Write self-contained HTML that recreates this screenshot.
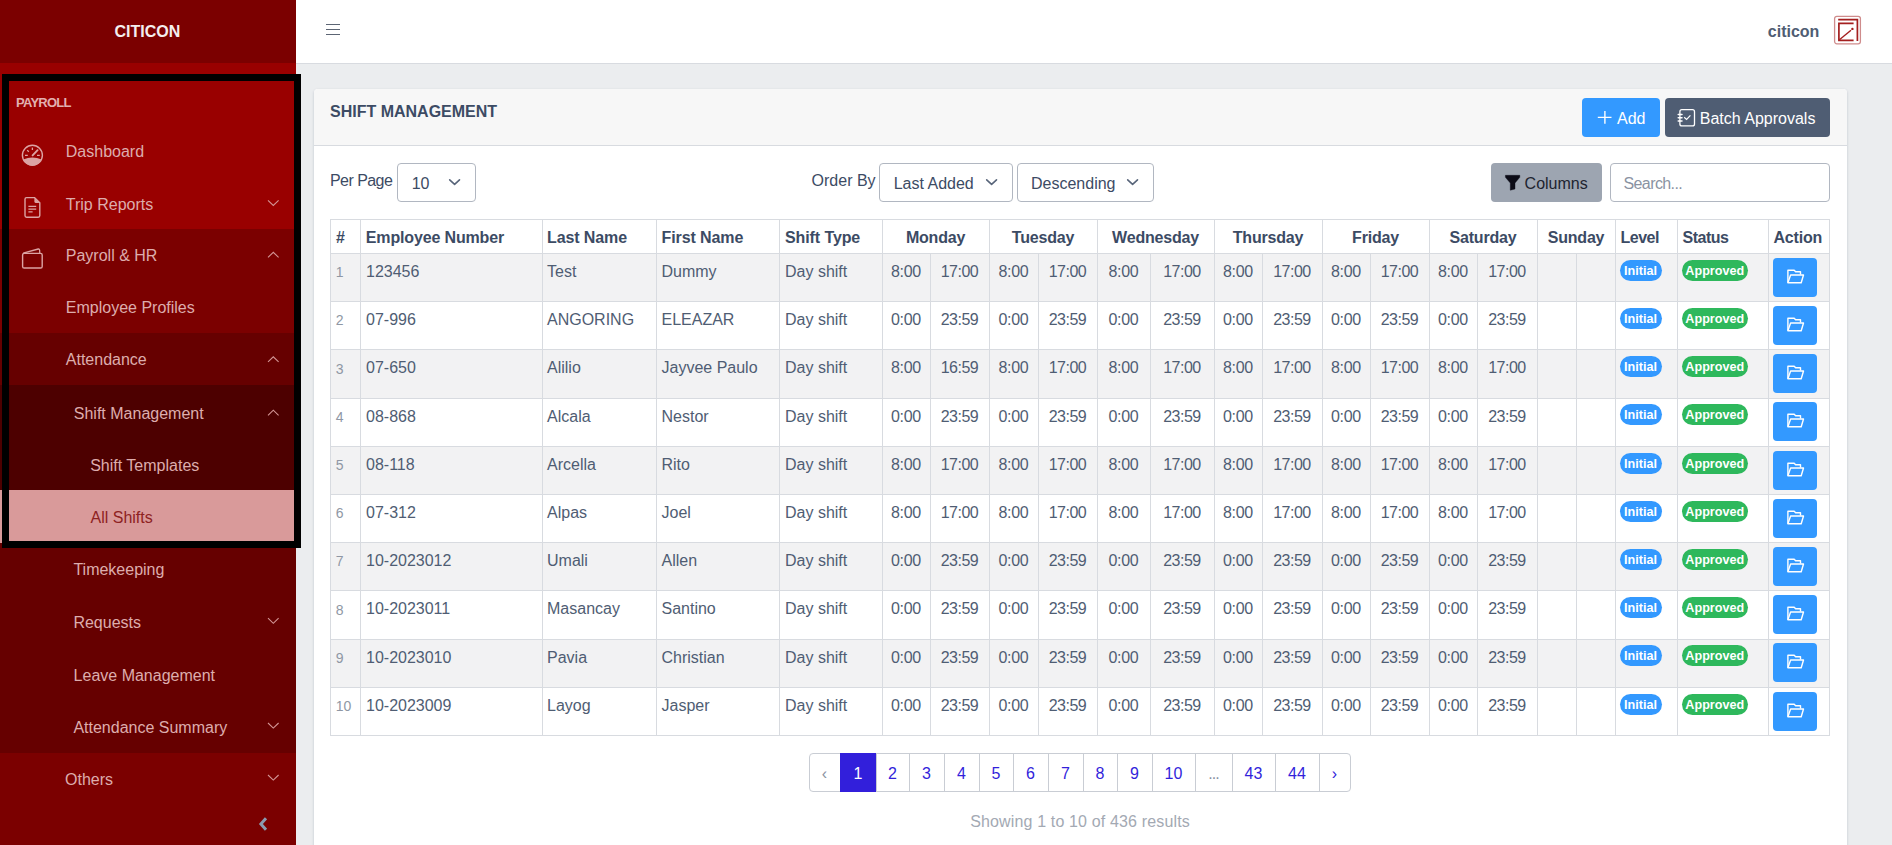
<!DOCTYPE html>
<html><head><meta charset="utf-8"><title>Shift Management</title>
<style>
html,body{margin:0;padding:0;}
body{width:1892px;height:845px;overflow:hidden;position:relative;background:#ebedef;font-family:"Liberation Sans", sans-serif;}
.t{position:absolute;white-space:nowrap;}
.r{position:absolute;}
.pill{border-radius:11px;color:#fff;font-size:12.6px;font-weight:700;line-height:22px;text-align:center;}
</style></head><body>
<div class="r" style="left:0px;top:0px;width:296px;height:63px;background:#7b0000;"></div>
<div class="r" style="left:0px;top:63px;width:296px;height:166px;background:#990000;"></div>
<div class="r" style="left:0px;top:229px;width:296px;height:104px;background:#7b0000;"></div>
<div class="r" style="left:0px;top:333px;width:296px;height:52px;background:#660000;"></div>
<div class="r" style="left:0px;top:385px;width:296px;height:105px;background:#4d0000;"></div>
<div class="r" style="left:0px;top:490px;width:296px;height:53px;background:#d99a9a;"></div>
<div class="r" style="left:0px;top:543px;width:296px;height:210px;background:#660000;"></div>
<div class="r" style="left:0px;top:753px;width:296px;height:92px;background:#7b0000;"></div>
<div class="t" style="left:114.5px;top:24.26px;font-size:16px;line-height:16px;font-weight:700;color:#f4eeee;">CITICON</div>
<div class="t" style="left:16px;top:96.40px;font-size:13px;line-height:13px;font-weight:700;color:#e2b0b0;letter-spacing:-0.75px">PAYROLL</div>
<div class="t" style="left:65.8px;top:143.86px;font-size:16px;line-height:16px;font-weight:400;color:#ddadad;">Dashboard</div>
<div class="t" style="left:65.8px;top:197.16px;font-size:16px;line-height:16px;font-weight:400;color:#ddadad;">Trip Reports</div>
<svg class="r" style="left:0;top:0" width="296" height="845"><path d="M268 200.3 L273.3 205.4 L278.6 200.3" fill="none" stroke="#d39595" stroke-width="1.1"/></svg>
<div class="t" style="left:65.8px;top:247.76px;font-size:16px;line-height:16px;font-weight:400;color:#ddadad;">Payroll &amp; HR</div>
<svg class="r" style="left:0;top:0" width="296" height="845"><path d="M268 257.4 L273.3 252.3 L278.6 257.4" fill="none" stroke="#d39595" stroke-width="1.1"/></svg>
<div class="t" style="left:65.8px;top:300.46px;font-size:16px;line-height:16px;font-weight:400;color:#ddadad;">Employee Profiles</div>
<div class="t" style="left:65.8px;top:352.26px;font-size:16px;line-height:16px;font-weight:400;color:#ddadad;">Attendance</div>
<svg class="r" style="left:0;top:0" width="296" height="845"><path d="M268 361.9 L273.3 356.8 L278.6 361.9" fill="none" stroke="#d39595" stroke-width="1.1"/></svg>
<div class="t" style="left:73.8px;top:405.66px;font-size:16px;line-height:16px;font-weight:400;color:#ddadad;">Shift Management</div>
<svg class="r" style="left:0;top:0" width="296" height="845"><path d="M268 415.3 L273.3 410.2 L278.6 415.3" fill="none" stroke="#d39595" stroke-width="1.1"/></svg>
<div class="t" style="left:90.2px;top:457.66px;font-size:16px;line-height:16px;font-weight:400;color:#ddadad;">Shift Templates</div>
<div class="t" style="left:90.5px;top:510.06px;font-size:16px;line-height:16px;font-weight:400;color:#8e2222;">All Shifts</div>
<div class="t" style="left:73.4px;top:562.46px;font-size:16px;line-height:16px;font-weight:400;color:#ddadad;">Timekeeping</div>
<div class="t" style="left:73.4px;top:615.06px;font-size:16px;line-height:16px;font-weight:400;color:#ddadad;">Requests</div>
<svg class="r" style="left:0;top:0" width="296" height="845"><path d="M268 618.2 L273.3 623.3 L278.6 618.2" fill="none" stroke="#d39595" stroke-width="1.1"/></svg>
<div class="t" style="left:73.6px;top:668.26px;font-size:16px;line-height:16px;font-weight:400;color:#ddadad;">Leave Management</div>
<div class="t" style="left:73.4px;top:719.86px;font-size:16px;line-height:16px;font-weight:400;color:#ddadad;">Attendance Summary</div>
<svg class="r" style="left:0;top:0" width="296" height="845"><path d="M268 723.0 L273.3 728.1 L278.6 723.0" fill="none" stroke="#d39595" stroke-width="1.1"/></svg>
<div class="t" style="left:65.0px;top:771.86px;font-size:16px;line-height:16px;font-weight:400;color:#ddadad;">Others</div>
<svg class="r" style="left:0;top:0" width="296" height="845"><path d="M268 775.0 L273.3 780.1 L278.6 775.0" fill="none" stroke="#d39595" stroke-width="1.1"/></svg>
<svg class="r" style="left:0;top:0" width="60" height="280">
<circle cx="32.4" cy="155.3" r="10" fill="none" stroke="#dca3a3" stroke-width="1.4"/>
<path d="M23.2 159.5 Q32.4 155.5 41.6 159.5 A10 10 0 0 1 23.2 159.5 Z" fill="#dca3a3"/>
<path d="M32.4 147.6 V150" stroke="#dca3a3" stroke-width="1.3"/>
<path d="M25 155.3 H27.8 M37 155.3 H39.8 M27.2 150.1 L28.8 151.7" stroke="#dca3a3" stroke-width="1.3"/>
<path d="M32.6 155.4 L37.6 150.2" stroke="#dca3a3" stroke-width="1.9" stroke-linecap="round"/>
<path d="M26.6 197.6 H34.6 L39.8 202.8 V215.6 Q39.8 217.2 38.2 217.2 H26.6 Q25 217.2 25 215.6 V199.2 Q25 197.6 26.6 197.6 Z" fill="none" stroke="#dca3a3" stroke-width="1.4"/>
<path d="M34.4 197.8 V201.4 Q34.4 203 36 203 H39.6 Z" fill="#dca3a3"/>
<path d="M28.4 206.4 H36.2 M28.4 209.2 H36.2 M28.4 211.9 H32.6" stroke="#dca3a3" stroke-width="1.2"/>
<rect x="22.6" y="253.4" width="19.6" height="14.6" rx="1.6" fill="none" stroke="#dca3a3" stroke-width="1.4"/>
<path d="M23.2 253.2 L38.2 249 Q39.4 248.8 39.6 250 L39.8 253.2" fill="none" stroke="#dca3a3" stroke-width="1.3"/>
</svg>
<svg class="r" style="left:250px;top:810px" width="30" height="30"><path d="M16 8.2 L10.9 14 L16 19.8" fill="none" stroke="#8a9bb0" stroke-width="3"/></svg>
<div class="r" style="left:296px;top:0px;width:1596px;height:63px;background:#ffffff;"></div>
<div class="r" style="left:296px;top:63px;width:1596px;height:1px;background:#d8dbe0;"></div>
<div class="r" style="left:326px;top:24px;width:14px;height:1.2px;background:#5c6574;"></div>
<div class="r" style="left:326px;top:29px;width:14px;height:1.2px;background:#5c6574;"></div>
<div class="r" style="left:326px;top:34px;width:14px;height:1.2px;background:#5c6574;"></div>
<div class="t" style="left:1767.8px;top:24.16px;font-size:16px;line-height:16px;font-weight:700;color:#4f5d73;">citicon</div>
<svg class="r" style="left:1830px;top:12px" width="36" height="36">
<rect x="4.6" y="4.4" width="25.8" height="27.4" rx="2.2" fill="none" stroke="#cf8c8c" stroke-width="1.3"/>
<path d="M8.2 7.6 H27.4 V29" fill="none" stroke="#a41f1f" stroke-width="1.7"/>
<path d="M23.6 11.4 H8.9 V28.4 H23.6" fill="none" stroke="#a41f1f" stroke-width="1.7"/>
<path d="M9.4 27.8 L21 18.2" stroke="#a41f1f" stroke-width="1.4"/>
<circle cx="22.4" cy="16.9" r="1.2" fill="#a41f1f"/>
</svg>
<div class="r" style="left:314px;top:89px;width:1533px;height:800px;background:#ffffff;border-radius:4px;box-shadow:0 1px 1px 0 rgba(60,75,100,.14),0 2px 1px -1px rgba(60,75,100,.12),0 1px 3px 0 rgba(60,75,100,.2)"></div>
<div class="r" style="left:314px;top:89px;width:1533px;height:56px;background:#f7f7f7;border-radius:4px 4px 0 0"></div>
<div class="r" style="left:314px;top:145px;width:1533px;height:1px;background:#d8dbe0;"></div>
<div class="t" style="left:330px;top:104.26px;font-size:16px;line-height:16px;font-weight:700;color:#3c4b64;">SHIFT MANAGEMENT</div>
<div class="r" style="left:1582px;top:98px;width:78px;height:39px;background:#3399ff;border-radius:4px"></div>
<svg class="r" style="left:1590px;top:104px" width="30" height="30"><path d="M7.8 13.4 H21.5 M14.9 7 V19.8" stroke="#fff" stroke-width="1.4"/></svg>
<div class="t" style="left:1617px;top:111.16px;font-size:16px;line-height:16px;font-weight:400;color:#ffffff;">Add</div>
<div class="r" style="left:1665px;top:98px;width:165px;height:39px;background:#4f5d73;border-radius:4px"></div>
<svg class="r" style="left:1672px;top:104px" width="30" height="30">
<rect x="7.9" y="5.7" width="14.6" height="16.2" rx="2" fill="none" stroke="#fff" stroke-width="1.3"/>
<path d="M6.2 10.5 H10 M6.2 13.8 H10 M6.2 17.1 H10" stroke="#fff" stroke-width="1.5" stroke-linecap="round"/>
<path d="M12.2 13.2 L14.6 15.4 L18.4 11.4" fill="none" stroke="#fff" stroke-width="1.2"/>
</svg>
<div class="t" style="left:1699.8px;top:111.16px;font-size:16px;line-height:16px;font-weight:400;color:#ffffff;">Batch Approvals</div>
<div class="t" style="left:330px;top:173.26px;font-size:16px;line-height:16px;font-weight:400;color:#3c4b64;letter-spacing:-0.55px">Per Page</div>
<div class="r" style="left:397px;top:163px;width:79px;height:39px;background:#fff;border:1px solid #b1b7c1;border-radius:4px;box-sizing:border-box"></div>
<div class="t" style="left:411.7px;top:176.06px;font-size:16px;line-height:16px;font-weight:400;color:#3c4b64;">10</div>
<svg class="r" style="left:446px;top:174px" width="16" height="16"><path d="M3.7 5.9 L8.6 10.4 L13.5 5.9" fill="none" stroke="#58657a" stroke-width="1.6" stroke-linecap="round" stroke-linejoin="round"/></svg>
<div class="t" style="left:811.6px;top:173.06px;font-size:16px;line-height:16px;font-weight:400;color:#3c4b64;">Order By</div>
<div class="r" style="left:879px;top:163px;width:134px;height:39px;background:#fff;border:1px solid #b1b7c1;border-radius:4px;box-sizing:border-box"></div>
<div class="t" style="left:893.7px;top:176.06px;font-size:16px;line-height:16px;font-weight:400;color:#3c4b64;">Last Added</div>
<svg class="r" style="left:983px;top:174px" width="16" height="16"><path d="M3.7 5.9 L8.6 10.4 L13.5 5.9" fill="none" stroke="#58657a" stroke-width="1.6" stroke-linecap="round" stroke-linejoin="round"/></svg>
<div class="r" style="left:1017px;top:163px;width:137px;height:39px;background:#fff;border:1px solid #b1b7c1;border-radius:4px;box-sizing:border-box"></div>
<div class="t" style="left:1031px;top:176.06px;font-size:16px;line-height:16px;font-weight:400;color:#3c4b64;">Descending</div>
<svg class="r" style="left:1124px;top:174px" width="16" height="16"><path d="M3.7 5.9 L8.6 10.4 L13.5 5.9" fill="none" stroke="#58657a" stroke-width="1.6" stroke-linecap="round" stroke-linejoin="round"/></svg>
<div class="r" style="left:1491px;top:163px;width:111px;height:39px;background:#9da5b1;border-radius:4px"></div>
<svg class="r" style="left:1504px;top:174px" width="18" height="18"><path d="M1.4 1.3 H15.8 V3.3 L11 9.1 V15 L6.3 16.2 V9.1 L1.4 3.3 Z" fill="#0b0b16" stroke="#0b0b16" stroke-width="0.4" stroke-linejoin="round"/></svg>
<div class="t" style="left:1524.6px;top:176.06px;font-size:16px;line-height:16px;font-weight:400;color:#1e2430;">Columns</div>
<div class="r" style="left:1610px;top:163px;width:220px;height:39px;background:#fff;border:1px solid #b1b7c1;border-radius:4px;box-sizing:border-box"></div>
<div class="t" style="left:1623.5px;top:176.06px;font-size:16px;line-height:16px;font-weight:400;color:#8a93a2;letter-spacing:-0.6px">Search...</div>
<div class="r" style="left:331px;top:254px;width:1498px;height:47px;background:#f2f2f3;"></div>
<div class="r" style="left:331px;top:350px;width:1498px;height:48px;background:#f2f2f3;"></div>
<div class="r" style="left:331px;top:447px;width:1498px;height:47px;background:#f2f2f3;"></div>
<div class="r" style="left:331px;top:543px;width:1498px;height:47px;background:#f2f2f3;"></div>
<div class="r" style="left:331px;top:640px;width:1498px;height:47px;background:#f2f2f3;"></div>
<div class="r" style="left:330px;top:219px;width:1500px;height:1px;background:#d8dbe0;"></div>
<div class="r" style="left:330px;top:253px;width:1500px;height:1px;background:#d8dbe0;"></div>
<div class="r" style="left:330px;top:301px;width:1500px;height:1px;background:#d8dbe0;"></div>
<div class="r" style="left:330px;top:349px;width:1500px;height:1px;background:#d8dbe0;"></div>
<div class="r" style="left:330px;top:398px;width:1500px;height:1px;background:#d8dbe0;"></div>
<div class="r" style="left:330px;top:446px;width:1500px;height:1px;background:#d8dbe0;"></div>
<div class="r" style="left:330px;top:494px;width:1500px;height:1px;background:#d8dbe0;"></div>
<div class="r" style="left:330px;top:542px;width:1500px;height:1px;background:#d8dbe0;"></div>
<div class="r" style="left:330px;top:590px;width:1500px;height:1px;background:#d8dbe0;"></div>
<div class="r" style="left:330px;top:639px;width:1500px;height:1px;background:#d8dbe0;"></div>
<div class="r" style="left:330px;top:687px;width:1500px;height:1px;background:#d8dbe0;"></div>
<div class="r" style="left:330px;top:735px;width:1500px;height:1px;background:#d8dbe0;"></div>
<div class="r" style="left:330px;top:219px;width:1px;height:517px;background:#d8dbe0;"></div>
<div class="r" style="left:360px;top:219px;width:1px;height:517px;background:#d8dbe0;"></div>
<div class="r" style="left:542px;top:219px;width:1px;height:517px;background:#d8dbe0;"></div>
<div class="r" style="left:656px;top:219px;width:1px;height:517px;background:#d8dbe0;"></div>
<div class="r" style="left:779px;top:219px;width:1px;height:517px;background:#d8dbe0;"></div>
<div class="r" style="left:882px;top:219px;width:1px;height:517px;background:#d8dbe0;"></div>
<div class="r" style="left:989px;top:219px;width:1px;height:517px;background:#d8dbe0;"></div>
<div class="r" style="left:1097px;top:219px;width:1px;height:517px;background:#d8dbe0;"></div>
<div class="r" style="left:1214px;top:219px;width:1px;height:517px;background:#d8dbe0;"></div>
<div class="r" style="left:1322px;top:219px;width:1px;height:517px;background:#d8dbe0;"></div>
<div class="r" style="left:1429px;top:219px;width:1px;height:517px;background:#d8dbe0;"></div>
<div class="r" style="left:1537px;top:219px;width:1px;height:517px;background:#d8dbe0;"></div>
<div class="r" style="left:1615px;top:219px;width:1px;height:517px;background:#d8dbe0;"></div>
<div class="r" style="left:1677px;top:219px;width:1px;height:517px;background:#d8dbe0;"></div>
<div class="r" style="left:1768px;top:219px;width:1px;height:517px;background:#d8dbe0;"></div>
<div class="r" style="left:1829px;top:219px;width:1px;height:517px;background:#d8dbe0;"></div>
<div class="r" style="left:930px;top:253px;width:1px;height:482px;background:#d8dbe0;"></div>
<div class="r" style="left:1038px;top:253px;width:1px;height:482px;background:#d8dbe0;"></div>
<div class="r" style="left:1150px;top:253px;width:1px;height:482px;background:#d8dbe0;"></div>
<div class="r" style="left:1262px;top:253px;width:1px;height:482px;background:#d8dbe0;"></div>
<div class="r" style="left:1370px;top:253px;width:1px;height:482px;background:#d8dbe0;"></div>
<div class="r" style="left:1477px;top:253px;width:1px;height:482px;background:#d8dbe0;"></div>
<div class="r" style="left:1576px;top:253px;width:1px;height:482px;background:#d8dbe0;"></div>
<div class="t" style="left:336px;top:230.06px;font-size:16px;line-height:16px;font-weight:700;color:#3c4b64;">#</div>
<div class="t" style="left:365.8px;top:230.06px;font-size:16px;line-height:16px;font-weight:700;color:#3c4b64;letter-spacing:-0.15px">Employee Number</div>
<div class="t" style="left:547px;top:230.06px;font-size:16px;line-height:16px;font-weight:700;color:#3c4b64;letter-spacing:-0.1px">Last Name</div>
<div class="t" style="left:661.5px;top:230.06px;font-size:16px;line-height:16px;font-weight:700;color:#3c4b64;letter-spacing:-0.1px">First Name</div>
<div class="t" style="left:785px;top:230.06px;font-size:16px;line-height:16px;font-weight:700;color:#3c4b64;letter-spacing:-0.1px">Shift Type</div>
<div class="t" style="left:882px;width:107px;text-align:center;top:230.06px;font-size:16px;line-height:16px;font-weight:700;color:#3c4b64;letter-spacing:-0.2px">Monday</div>
<div class="t" style="left:989px;width:108px;text-align:center;top:230.06px;font-size:16px;line-height:16px;font-weight:700;color:#3c4b64;letter-spacing:-0.2px">Tuesday</div>
<div class="t" style="left:1097px;width:117px;text-align:center;top:230.06px;font-size:16px;line-height:16px;font-weight:700;color:#3c4b64;letter-spacing:-0.2px">Wednesday</div>
<div class="t" style="left:1214px;width:108px;text-align:center;top:230.06px;font-size:16px;line-height:16px;font-weight:700;color:#3c4b64;letter-spacing:-0.2px">Thursday</div>
<div class="t" style="left:1322px;width:107px;text-align:center;top:230.06px;font-size:16px;line-height:16px;font-weight:700;color:#3c4b64;letter-spacing:-0.2px">Friday</div>
<div class="t" style="left:1429px;width:108px;text-align:center;top:230.06px;font-size:16px;line-height:16px;font-weight:700;color:#3c4b64;letter-spacing:-0.2px">Saturday</div>
<div class="t" style="left:1537px;width:78px;text-align:center;top:230.06px;font-size:16px;line-height:16px;font-weight:700;color:#3c4b64;letter-spacing:-0.2px">Sunday</div>
<div class="t" style="left:1620.5px;top:230.06px;font-size:16px;line-height:16px;font-weight:700;color:#3c4b64;letter-spacing:-0.5px">Level</div>
<div class="t" style="left:1682.5px;top:230.06px;font-size:16px;line-height:16px;font-weight:700;color:#3c4b64;letter-spacing:-0.5px">Status</div>
<div class="t" style="left:1773.5px;top:230.06px;font-size:16px;line-height:16px;font-weight:700;color:#3c4b64;letter-spacing:-0.2px">Action</div>
<div class="t" style="left:335.8px;top:265.15px;font-size:14px;line-height:14px;font-weight:400;color:#8f97a4;">1</div>
<div class="t" style="left:366px;top:264.06px;font-size:16px;line-height:16px;font-weight:400;color:#4f5d73;">123456</div>
<div class="t" style="left:547px;top:264.06px;font-size:16px;line-height:16px;font-weight:400;color:#4f5d73;">Test</div>
<div class="t" style="left:661.5px;top:264.06px;font-size:16px;line-height:16px;font-weight:400;color:#4f5d73;">Dummy</div>
<div class="t" style="left:785px;top:264.06px;font-size:16px;line-height:16px;font-weight:400;color:#4f5d73;">Day shift</div>
<div class="t" style="left:882px;width:48px;text-align:center;top:264.06px;font-size:16px;line-height:16px;font-weight:400;color:#4f5d73;letter-spacing:-0.3px">8:00</div>
<div class="t" style="left:930px;width:59px;text-align:center;top:264.06px;font-size:16px;line-height:16px;font-weight:400;color:#4f5d73;letter-spacing:-0.5px">17:00</div>
<div class="t" style="left:989px;width:49px;text-align:center;top:264.06px;font-size:16px;line-height:16px;font-weight:400;color:#4f5d73;letter-spacing:-0.3px">8:00</div>
<div class="t" style="left:1038px;width:59px;text-align:center;top:264.06px;font-size:16px;line-height:16px;font-weight:400;color:#4f5d73;letter-spacing:-0.5px">17:00</div>
<div class="t" style="left:1097px;width:53px;text-align:center;top:264.06px;font-size:16px;line-height:16px;font-weight:400;color:#4f5d73;letter-spacing:-0.3px">8:00</div>
<div class="t" style="left:1150px;width:64px;text-align:center;top:264.06px;font-size:16px;line-height:16px;font-weight:400;color:#4f5d73;letter-spacing:-0.5px">17:00</div>
<div class="t" style="left:1214px;width:48px;text-align:center;top:264.06px;font-size:16px;line-height:16px;font-weight:400;color:#4f5d73;letter-spacing:-0.3px">8:00</div>
<div class="t" style="left:1262px;width:60px;text-align:center;top:264.06px;font-size:16px;line-height:16px;font-weight:400;color:#4f5d73;letter-spacing:-0.5px">17:00</div>
<div class="t" style="left:1322px;width:48px;text-align:center;top:264.06px;font-size:16px;line-height:16px;font-weight:400;color:#4f5d73;letter-spacing:-0.3px">8:00</div>
<div class="t" style="left:1370px;width:59px;text-align:center;top:264.06px;font-size:16px;line-height:16px;font-weight:400;color:#4f5d73;letter-spacing:-0.5px">17:00</div>
<div class="t" style="left:1429px;width:48px;text-align:center;top:264.06px;font-size:16px;line-height:16px;font-weight:400;color:#4f5d73;letter-spacing:-0.3px">8:00</div>
<div class="t" style="left:1477px;width:60px;text-align:center;top:264.06px;font-size:16px;line-height:16px;font-weight:400;color:#4f5d73;letter-spacing:-0.5px">17:00</div>
<div class="r pill" style="left:1619.5px;top:259.8px;width:42px;height:21px;background:#3399ff">Initial</div>
<div class="r pill" style="left:1682px;top:259.8px;width:65.5px;height:21px;background:#2eb85c">Approved</div>
<div class="r" style="left:1773px;top:257.8px;width:44px;height:39px;background:#3399ff;border-radius:4px"></div>
<svg class="r" style="left:1786px;top:267.8px" width="19" height="17"><path d="M1.9 14.8 V2.2 H8.2 L9.6 3.8 H14.5 V6.4" fill="none" stroke="#fff" stroke-width="1.4" stroke-linejoin="round"/><path d="M1.9 14.8 L4.6 7 H17.5 L15.2 14.8 Z" fill="none" stroke="#fff" stroke-width="1.4" stroke-linejoin="round"/></svg>
<div class="t" style="left:335.8px;top:313.35px;font-size:14px;line-height:14px;font-weight:400;color:#8f97a4;">2</div>
<div class="t" style="left:366px;top:312.26px;font-size:16px;line-height:16px;font-weight:400;color:#4f5d73;">07-996</div>
<div class="t" style="left:547px;top:312.26px;font-size:16px;line-height:16px;font-weight:400;color:#4f5d73;">ANGORING</div>
<div class="t" style="left:661.5px;top:312.26px;font-size:16px;line-height:16px;font-weight:400;color:#4f5d73;">ELEAZAR</div>
<div class="t" style="left:785px;top:312.26px;font-size:16px;line-height:16px;font-weight:400;color:#4f5d73;">Day shift</div>
<div class="t" style="left:882px;width:48px;text-align:center;top:312.26px;font-size:16px;line-height:16px;font-weight:400;color:#4f5d73;letter-spacing:-0.3px">0:00</div>
<div class="t" style="left:930px;width:59px;text-align:center;top:312.26px;font-size:16px;line-height:16px;font-weight:400;color:#4f5d73;letter-spacing:-0.5px">23:59</div>
<div class="t" style="left:989px;width:49px;text-align:center;top:312.26px;font-size:16px;line-height:16px;font-weight:400;color:#4f5d73;letter-spacing:-0.3px">0:00</div>
<div class="t" style="left:1038px;width:59px;text-align:center;top:312.26px;font-size:16px;line-height:16px;font-weight:400;color:#4f5d73;letter-spacing:-0.5px">23:59</div>
<div class="t" style="left:1097px;width:53px;text-align:center;top:312.26px;font-size:16px;line-height:16px;font-weight:400;color:#4f5d73;letter-spacing:-0.3px">0:00</div>
<div class="t" style="left:1150px;width:64px;text-align:center;top:312.26px;font-size:16px;line-height:16px;font-weight:400;color:#4f5d73;letter-spacing:-0.5px">23:59</div>
<div class="t" style="left:1214px;width:48px;text-align:center;top:312.26px;font-size:16px;line-height:16px;font-weight:400;color:#4f5d73;letter-spacing:-0.3px">0:00</div>
<div class="t" style="left:1262px;width:60px;text-align:center;top:312.26px;font-size:16px;line-height:16px;font-weight:400;color:#4f5d73;letter-spacing:-0.5px">23:59</div>
<div class="t" style="left:1322px;width:48px;text-align:center;top:312.26px;font-size:16px;line-height:16px;font-weight:400;color:#4f5d73;letter-spacing:-0.3px">0:00</div>
<div class="t" style="left:1370px;width:59px;text-align:center;top:312.26px;font-size:16px;line-height:16px;font-weight:400;color:#4f5d73;letter-spacing:-0.5px">23:59</div>
<div class="t" style="left:1429px;width:48px;text-align:center;top:312.26px;font-size:16px;line-height:16px;font-weight:400;color:#4f5d73;letter-spacing:-0.3px">0:00</div>
<div class="t" style="left:1477px;width:60px;text-align:center;top:312.26px;font-size:16px;line-height:16px;font-weight:400;color:#4f5d73;letter-spacing:-0.5px">23:59</div>
<div class="r pill" style="left:1619.5px;top:308.0px;width:42px;height:21px;background:#3399ff">Initial</div>
<div class="r pill" style="left:1682px;top:308.0px;width:65.5px;height:21px;background:#2eb85c">Approved</div>
<div class="r" style="left:1773px;top:306.0px;width:44px;height:39px;background:#3399ff;border-radius:4px"></div>
<svg class="r" style="left:1786px;top:316.0px" width="19" height="17"><path d="M1.9 14.8 V2.2 H8.2 L9.6 3.8 H14.5 V6.4" fill="none" stroke="#fff" stroke-width="1.4" stroke-linejoin="round"/><path d="M1.9 14.8 L4.6 7 H17.5 L15.2 14.8 Z" fill="none" stroke="#fff" stroke-width="1.4" stroke-linejoin="round"/></svg>
<div class="t" style="left:335.8px;top:361.55px;font-size:14px;line-height:14px;font-weight:400;color:#8f97a4;">3</div>
<div class="t" style="left:366px;top:360.46px;font-size:16px;line-height:16px;font-weight:400;color:#4f5d73;">07-650</div>
<div class="t" style="left:547px;top:360.46px;font-size:16px;line-height:16px;font-weight:400;color:#4f5d73;">Alilio</div>
<div class="t" style="left:661.5px;top:360.46px;font-size:16px;line-height:16px;font-weight:400;color:#4f5d73;">Jayvee Paulo</div>
<div class="t" style="left:785px;top:360.46px;font-size:16px;line-height:16px;font-weight:400;color:#4f5d73;">Day shift</div>
<div class="t" style="left:882px;width:48px;text-align:center;top:360.46px;font-size:16px;line-height:16px;font-weight:400;color:#4f5d73;letter-spacing:-0.3px">8:00</div>
<div class="t" style="left:930px;width:59px;text-align:center;top:360.46px;font-size:16px;line-height:16px;font-weight:400;color:#4f5d73;letter-spacing:-0.5px">16:59</div>
<div class="t" style="left:989px;width:49px;text-align:center;top:360.46px;font-size:16px;line-height:16px;font-weight:400;color:#4f5d73;letter-spacing:-0.3px">8:00</div>
<div class="t" style="left:1038px;width:59px;text-align:center;top:360.46px;font-size:16px;line-height:16px;font-weight:400;color:#4f5d73;letter-spacing:-0.5px">17:00</div>
<div class="t" style="left:1097px;width:53px;text-align:center;top:360.46px;font-size:16px;line-height:16px;font-weight:400;color:#4f5d73;letter-spacing:-0.3px">8:00</div>
<div class="t" style="left:1150px;width:64px;text-align:center;top:360.46px;font-size:16px;line-height:16px;font-weight:400;color:#4f5d73;letter-spacing:-0.5px">17:00</div>
<div class="t" style="left:1214px;width:48px;text-align:center;top:360.46px;font-size:16px;line-height:16px;font-weight:400;color:#4f5d73;letter-spacing:-0.3px">8:00</div>
<div class="t" style="left:1262px;width:60px;text-align:center;top:360.46px;font-size:16px;line-height:16px;font-weight:400;color:#4f5d73;letter-spacing:-0.5px">17:00</div>
<div class="t" style="left:1322px;width:48px;text-align:center;top:360.46px;font-size:16px;line-height:16px;font-weight:400;color:#4f5d73;letter-spacing:-0.3px">8:00</div>
<div class="t" style="left:1370px;width:59px;text-align:center;top:360.46px;font-size:16px;line-height:16px;font-weight:400;color:#4f5d73;letter-spacing:-0.5px">17:00</div>
<div class="t" style="left:1429px;width:48px;text-align:center;top:360.46px;font-size:16px;line-height:16px;font-weight:400;color:#4f5d73;letter-spacing:-0.3px">8:00</div>
<div class="t" style="left:1477px;width:60px;text-align:center;top:360.46px;font-size:16px;line-height:16px;font-weight:400;color:#4f5d73;letter-spacing:-0.5px">17:00</div>
<div class="r pill" style="left:1619.5px;top:356.2px;width:42px;height:21px;background:#3399ff">Initial</div>
<div class="r pill" style="left:1682px;top:356.2px;width:65.5px;height:21px;background:#2eb85c">Approved</div>
<div class="r" style="left:1773px;top:354.2px;width:44px;height:39px;background:#3399ff;border-radius:4px"></div>
<svg class="r" style="left:1786px;top:364.2px" width="19" height="17"><path d="M1.9 14.8 V2.2 H8.2 L9.6 3.8 H14.5 V6.4" fill="none" stroke="#fff" stroke-width="1.4" stroke-linejoin="round"/><path d="M1.9 14.8 L4.6 7 H17.5 L15.2 14.8 Z" fill="none" stroke="#fff" stroke-width="1.4" stroke-linejoin="round"/></svg>
<div class="t" style="left:335.8px;top:409.75px;font-size:14px;line-height:14px;font-weight:400;color:#8f97a4;">4</div>
<div class="t" style="left:366px;top:408.66px;font-size:16px;line-height:16px;font-weight:400;color:#4f5d73;">08-868</div>
<div class="t" style="left:547px;top:408.66px;font-size:16px;line-height:16px;font-weight:400;color:#4f5d73;">Alcala</div>
<div class="t" style="left:661.5px;top:408.66px;font-size:16px;line-height:16px;font-weight:400;color:#4f5d73;">Nestor</div>
<div class="t" style="left:785px;top:408.66px;font-size:16px;line-height:16px;font-weight:400;color:#4f5d73;">Day shift</div>
<div class="t" style="left:882px;width:48px;text-align:center;top:408.66px;font-size:16px;line-height:16px;font-weight:400;color:#4f5d73;letter-spacing:-0.3px">0:00</div>
<div class="t" style="left:930px;width:59px;text-align:center;top:408.66px;font-size:16px;line-height:16px;font-weight:400;color:#4f5d73;letter-spacing:-0.5px">23:59</div>
<div class="t" style="left:989px;width:49px;text-align:center;top:408.66px;font-size:16px;line-height:16px;font-weight:400;color:#4f5d73;letter-spacing:-0.3px">0:00</div>
<div class="t" style="left:1038px;width:59px;text-align:center;top:408.66px;font-size:16px;line-height:16px;font-weight:400;color:#4f5d73;letter-spacing:-0.5px">23:59</div>
<div class="t" style="left:1097px;width:53px;text-align:center;top:408.66px;font-size:16px;line-height:16px;font-weight:400;color:#4f5d73;letter-spacing:-0.3px">0:00</div>
<div class="t" style="left:1150px;width:64px;text-align:center;top:408.66px;font-size:16px;line-height:16px;font-weight:400;color:#4f5d73;letter-spacing:-0.5px">23:59</div>
<div class="t" style="left:1214px;width:48px;text-align:center;top:408.66px;font-size:16px;line-height:16px;font-weight:400;color:#4f5d73;letter-spacing:-0.3px">0:00</div>
<div class="t" style="left:1262px;width:60px;text-align:center;top:408.66px;font-size:16px;line-height:16px;font-weight:400;color:#4f5d73;letter-spacing:-0.5px">23:59</div>
<div class="t" style="left:1322px;width:48px;text-align:center;top:408.66px;font-size:16px;line-height:16px;font-weight:400;color:#4f5d73;letter-spacing:-0.3px">0:00</div>
<div class="t" style="left:1370px;width:59px;text-align:center;top:408.66px;font-size:16px;line-height:16px;font-weight:400;color:#4f5d73;letter-spacing:-0.5px">23:59</div>
<div class="t" style="left:1429px;width:48px;text-align:center;top:408.66px;font-size:16px;line-height:16px;font-weight:400;color:#4f5d73;letter-spacing:-0.3px">0:00</div>
<div class="t" style="left:1477px;width:60px;text-align:center;top:408.66px;font-size:16px;line-height:16px;font-weight:400;color:#4f5d73;letter-spacing:-0.5px">23:59</div>
<div class="r pill" style="left:1619.5px;top:404.4px;width:42px;height:21px;background:#3399ff">Initial</div>
<div class="r pill" style="left:1682px;top:404.4px;width:65.5px;height:21px;background:#2eb85c">Approved</div>
<div class="r" style="left:1773px;top:402.4px;width:44px;height:39px;background:#3399ff;border-radius:4px"></div>
<svg class="r" style="left:1786px;top:412.4px" width="19" height="17"><path d="M1.9 14.8 V2.2 H8.2 L9.6 3.8 H14.5 V6.4" fill="none" stroke="#fff" stroke-width="1.4" stroke-linejoin="round"/><path d="M1.9 14.8 L4.6 7 H17.5 L15.2 14.8 Z" fill="none" stroke="#fff" stroke-width="1.4" stroke-linejoin="round"/></svg>
<div class="t" style="left:335.8px;top:457.95px;font-size:14px;line-height:14px;font-weight:400;color:#8f97a4;">5</div>
<div class="t" style="left:366px;top:456.86px;font-size:16px;line-height:16px;font-weight:400;color:#4f5d73;">08-118</div>
<div class="t" style="left:547px;top:456.86px;font-size:16px;line-height:16px;font-weight:400;color:#4f5d73;">Arcella</div>
<div class="t" style="left:661.5px;top:456.86px;font-size:16px;line-height:16px;font-weight:400;color:#4f5d73;">Rito</div>
<div class="t" style="left:785px;top:456.86px;font-size:16px;line-height:16px;font-weight:400;color:#4f5d73;">Day shift</div>
<div class="t" style="left:882px;width:48px;text-align:center;top:456.86px;font-size:16px;line-height:16px;font-weight:400;color:#4f5d73;letter-spacing:-0.3px">8:00</div>
<div class="t" style="left:930px;width:59px;text-align:center;top:456.86px;font-size:16px;line-height:16px;font-weight:400;color:#4f5d73;letter-spacing:-0.5px">17:00</div>
<div class="t" style="left:989px;width:49px;text-align:center;top:456.86px;font-size:16px;line-height:16px;font-weight:400;color:#4f5d73;letter-spacing:-0.3px">8:00</div>
<div class="t" style="left:1038px;width:59px;text-align:center;top:456.86px;font-size:16px;line-height:16px;font-weight:400;color:#4f5d73;letter-spacing:-0.5px">17:00</div>
<div class="t" style="left:1097px;width:53px;text-align:center;top:456.86px;font-size:16px;line-height:16px;font-weight:400;color:#4f5d73;letter-spacing:-0.3px">8:00</div>
<div class="t" style="left:1150px;width:64px;text-align:center;top:456.86px;font-size:16px;line-height:16px;font-weight:400;color:#4f5d73;letter-spacing:-0.5px">17:00</div>
<div class="t" style="left:1214px;width:48px;text-align:center;top:456.86px;font-size:16px;line-height:16px;font-weight:400;color:#4f5d73;letter-spacing:-0.3px">8:00</div>
<div class="t" style="left:1262px;width:60px;text-align:center;top:456.86px;font-size:16px;line-height:16px;font-weight:400;color:#4f5d73;letter-spacing:-0.5px">17:00</div>
<div class="t" style="left:1322px;width:48px;text-align:center;top:456.86px;font-size:16px;line-height:16px;font-weight:400;color:#4f5d73;letter-spacing:-0.3px">8:00</div>
<div class="t" style="left:1370px;width:59px;text-align:center;top:456.86px;font-size:16px;line-height:16px;font-weight:400;color:#4f5d73;letter-spacing:-0.5px">17:00</div>
<div class="t" style="left:1429px;width:48px;text-align:center;top:456.86px;font-size:16px;line-height:16px;font-weight:400;color:#4f5d73;letter-spacing:-0.3px">8:00</div>
<div class="t" style="left:1477px;width:60px;text-align:center;top:456.86px;font-size:16px;line-height:16px;font-weight:400;color:#4f5d73;letter-spacing:-0.5px">17:00</div>
<div class="r pill" style="left:1619.5px;top:452.6px;width:42px;height:21px;background:#3399ff">Initial</div>
<div class="r pill" style="left:1682px;top:452.6px;width:65.5px;height:21px;background:#2eb85c">Approved</div>
<div class="r" style="left:1773px;top:450.6px;width:44px;height:39px;background:#3399ff;border-radius:4px"></div>
<svg class="r" style="left:1786px;top:460.6px" width="19" height="17"><path d="M1.9 14.8 V2.2 H8.2 L9.6 3.8 H14.5 V6.4" fill="none" stroke="#fff" stroke-width="1.4" stroke-linejoin="round"/><path d="M1.9 14.8 L4.6 7 H17.5 L15.2 14.8 Z" fill="none" stroke="#fff" stroke-width="1.4" stroke-linejoin="round"/></svg>
<div class="t" style="left:335.8px;top:506.15px;font-size:14px;line-height:14px;font-weight:400;color:#8f97a4;">6</div>
<div class="t" style="left:366px;top:505.06px;font-size:16px;line-height:16px;font-weight:400;color:#4f5d73;">07-312</div>
<div class="t" style="left:547px;top:505.06px;font-size:16px;line-height:16px;font-weight:400;color:#4f5d73;">Alpas</div>
<div class="t" style="left:661.5px;top:505.06px;font-size:16px;line-height:16px;font-weight:400;color:#4f5d73;">Joel</div>
<div class="t" style="left:785px;top:505.06px;font-size:16px;line-height:16px;font-weight:400;color:#4f5d73;">Day shift</div>
<div class="t" style="left:882px;width:48px;text-align:center;top:505.06px;font-size:16px;line-height:16px;font-weight:400;color:#4f5d73;letter-spacing:-0.3px">8:00</div>
<div class="t" style="left:930px;width:59px;text-align:center;top:505.06px;font-size:16px;line-height:16px;font-weight:400;color:#4f5d73;letter-spacing:-0.5px">17:00</div>
<div class="t" style="left:989px;width:49px;text-align:center;top:505.06px;font-size:16px;line-height:16px;font-weight:400;color:#4f5d73;letter-spacing:-0.3px">8:00</div>
<div class="t" style="left:1038px;width:59px;text-align:center;top:505.06px;font-size:16px;line-height:16px;font-weight:400;color:#4f5d73;letter-spacing:-0.5px">17:00</div>
<div class="t" style="left:1097px;width:53px;text-align:center;top:505.06px;font-size:16px;line-height:16px;font-weight:400;color:#4f5d73;letter-spacing:-0.3px">8:00</div>
<div class="t" style="left:1150px;width:64px;text-align:center;top:505.06px;font-size:16px;line-height:16px;font-weight:400;color:#4f5d73;letter-spacing:-0.5px">17:00</div>
<div class="t" style="left:1214px;width:48px;text-align:center;top:505.06px;font-size:16px;line-height:16px;font-weight:400;color:#4f5d73;letter-spacing:-0.3px">8:00</div>
<div class="t" style="left:1262px;width:60px;text-align:center;top:505.06px;font-size:16px;line-height:16px;font-weight:400;color:#4f5d73;letter-spacing:-0.5px">17:00</div>
<div class="t" style="left:1322px;width:48px;text-align:center;top:505.06px;font-size:16px;line-height:16px;font-weight:400;color:#4f5d73;letter-spacing:-0.3px">8:00</div>
<div class="t" style="left:1370px;width:59px;text-align:center;top:505.06px;font-size:16px;line-height:16px;font-weight:400;color:#4f5d73;letter-spacing:-0.5px">17:00</div>
<div class="t" style="left:1429px;width:48px;text-align:center;top:505.06px;font-size:16px;line-height:16px;font-weight:400;color:#4f5d73;letter-spacing:-0.3px">8:00</div>
<div class="t" style="left:1477px;width:60px;text-align:center;top:505.06px;font-size:16px;line-height:16px;font-weight:400;color:#4f5d73;letter-spacing:-0.5px">17:00</div>
<div class="r pill" style="left:1619.5px;top:500.8px;width:42px;height:21px;background:#3399ff">Initial</div>
<div class="r pill" style="left:1682px;top:500.8px;width:65.5px;height:21px;background:#2eb85c">Approved</div>
<div class="r" style="left:1773px;top:498.8px;width:44px;height:39px;background:#3399ff;border-radius:4px"></div>
<svg class="r" style="left:1786px;top:508.8px" width="19" height="17"><path d="M1.9 14.8 V2.2 H8.2 L9.6 3.8 H14.5 V6.4" fill="none" stroke="#fff" stroke-width="1.4" stroke-linejoin="round"/><path d="M1.9 14.8 L4.6 7 H17.5 L15.2 14.8 Z" fill="none" stroke="#fff" stroke-width="1.4" stroke-linejoin="round"/></svg>
<div class="t" style="left:335.8px;top:554.35px;font-size:14px;line-height:14px;font-weight:400;color:#8f97a4;">7</div>
<div class="t" style="left:366px;top:553.26px;font-size:16px;line-height:16px;font-weight:400;color:#4f5d73;">10-2023012</div>
<div class="t" style="left:547px;top:553.26px;font-size:16px;line-height:16px;font-weight:400;color:#4f5d73;">Umali</div>
<div class="t" style="left:661.5px;top:553.26px;font-size:16px;line-height:16px;font-weight:400;color:#4f5d73;">Allen</div>
<div class="t" style="left:785px;top:553.26px;font-size:16px;line-height:16px;font-weight:400;color:#4f5d73;">Day shift</div>
<div class="t" style="left:882px;width:48px;text-align:center;top:553.26px;font-size:16px;line-height:16px;font-weight:400;color:#4f5d73;letter-spacing:-0.3px">0:00</div>
<div class="t" style="left:930px;width:59px;text-align:center;top:553.26px;font-size:16px;line-height:16px;font-weight:400;color:#4f5d73;letter-spacing:-0.5px">23:59</div>
<div class="t" style="left:989px;width:49px;text-align:center;top:553.26px;font-size:16px;line-height:16px;font-weight:400;color:#4f5d73;letter-spacing:-0.3px">0:00</div>
<div class="t" style="left:1038px;width:59px;text-align:center;top:553.26px;font-size:16px;line-height:16px;font-weight:400;color:#4f5d73;letter-spacing:-0.5px">23:59</div>
<div class="t" style="left:1097px;width:53px;text-align:center;top:553.26px;font-size:16px;line-height:16px;font-weight:400;color:#4f5d73;letter-spacing:-0.3px">0:00</div>
<div class="t" style="left:1150px;width:64px;text-align:center;top:553.26px;font-size:16px;line-height:16px;font-weight:400;color:#4f5d73;letter-spacing:-0.5px">23:59</div>
<div class="t" style="left:1214px;width:48px;text-align:center;top:553.26px;font-size:16px;line-height:16px;font-weight:400;color:#4f5d73;letter-spacing:-0.3px">0:00</div>
<div class="t" style="left:1262px;width:60px;text-align:center;top:553.26px;font-size:16px;line-height:16px;font-weight:400;color:#4f5d73;letter-spacing:-0.5px">23:59</div>
<div class="t" style="left:1322px;width:48px;text-align:center;top:553.26px;font-size:16px;line-height:16px;font-weight:400;color:#4f5d73;letter-spacing:-0.3px">0:00</div>
<div class="t" style="left:1370px;width:59px;text-align:center;top:553.26px;font-size:16px;line-height:16px;font-weight:400;color:#4f5d73;letter-spacing:-0.5px">23:59</div>
<div class="t" style="left:1429px;width:48px;text-align:center;top:553.26px;font-size:16px;line-height:16px;font-weight:400;color:#4f5d73;letter-spacing:-0.3px">0:00</div>
<div class="t" style="left:1477px;width:60px;text-align:center;top:553.26px;font-size:16px;line-height:16px;font-weight:400;color:#4f5d73;letter-spacing:-0.5px">23:59</div>
<div class="r pill" style="left:1619.5px;top:549.0px;width:42px;height:21px;background:#3399ff">Initial</div>
<div class="r pill" style="left:1682px;top:549.0px;width:65.5px;height:21px;background:#2eb85c">Approved</div>
<div class="r" style="left:1773px;top:547.0px;width:44px;height:39px;background:#3399ff;border-radius:4px"></div>
<svg class="r" style="left:1786px;top:557.0px" width="19" height="17"><path d="M1.9 14.8 V2.2 H8.2 L9.6 3.8 H14.5 V6.4" fill="none" stroke="#fff" stroke-width="1.4" stroke-linejoin="round"/><path d="M1.9 14.8 L4.6 7 H17.5 L15.2 14.8 Z" fill="none" stroke="#fff" stroke-width="1.4" stroke-linejoin="round"/></svg>
<div class="t" style="left:335.8px;top:602.55px;font-size:14px;line-height:14px;font-weight:400;color:#8f97a4;">8</div>
<div class="t" style="left:366px;top:601.46px;font-size:16px;line-height:16px;font-weight:400;color:#4f5d73;">10-2023011</div>
<div class="t" style="left:547px;top:601.46px;font-size:16px;line-height:16px;font-weight:400;color:#4f5d73;">Masancay</div>
<div class="t" style="left:661.5px;top:601.46px;font-size:16px;line-height:16px;font-weight:400;color:#4f5d73;">Santino</div>
<div class="t" style="left:785px;top:601.46px;font-size:16px;line-height:16px;font-weight:400;color:#4f5d73;">Day shift</div>
<div class="t" style="left:882px;width:48px;text-align:center;top:601.46px;font-size:16px;line-height:16px;font-weight:400;color:#4f5d73;letter-spacing:-0.3px">0:00</div>
<div class="t" style="left:930px;width:59px;text-align:center;top:601.46px;font-size:16px;line-height:16px;font-weight:400;color:#4f5d73;letter-spacing:-0.5px">23:59</div>
<div class="t" style="left:989px;width:49px;text-align:center;top:601.46px;font-size:16px;line-height:16px;font-weight:400;color:#4f5d73;letter-spacing:-0.3px">0:00</div>
<div class="t" style="left:1038px;width:59px;text-align:center;top:601.46px;font-size:16px;line-height:16px;font-weight:400;color:#4f5d73;letter-spacing:-0.5px">23:59</div>
<div class="t" style="left:1097px;width:53px;text-align:center;top:601.46px;font-size:16px;line-height:16px;font-weight:400;color:#4f5d73;letter-spacing:-0.3px">0:00</div>
<div class="t" style="left:1150px;width:64px;text-align:center;top:601.46px;font-size:16px;line-height:16px;font-weight:400;color:#4f5d73;letter-spacing:-0.5px">23:59</div>
<div class="t" style="left:1214px;width:48px;text-align:center;top:601.46px;font-size:16px;line-height:16px;font-weight:400;color:#4f5d73;letter-spacing:-0.3px">0:00</div>
<div class="t" style="left:1262px;width:60px;text-align:center;top:601.46px;font-size:16px;line-height:16px;font-weight:400;color:#4f5d73;letter-spacing:-0.5px">23:59</div>
<div class="t" style="left:1322px;width:48px;text-align:center;top:601.46px;font-size:16px;line-height:16px;font-weight:400;color:#4f5d73;letter-spacing:-0.3px">0:00</div>
<div class="t" style="left:1370px;width:59px;text-align:center;top:601.46px;font-size:16px;line-height:16px;font-weight:400;color:#4f5d73;letter-spacing:-0.5px">23:59</div>
<div class="t" style="left:1429px;width:48px;text-align:center;top:601.46px;font-size:16px;line-height:16px;font-weight:400;color:#4f5d73;letter-spacing:-0.3px">0:00</div>
<div class="t" style="left:1477px;width:60px;text-align:center;top:601.46px;font-size:16px;line-height:16px;font-weight:400;color:#4f5d73;letter-spacing:-0.5px">23:59</div>
<div class="r pill" style="left:1619.5px;top:597.2px;width:42px;height:21px;background:#3399ff">Initial</div>
<div class="r pill" style="left:1682px;top:597.2px;width:65.5px;height:21px;background:#2eb85c">Approved</div>
<div class="r" style="left:1773px;top:595.2px;width:44px;height:39px;background:#3399ff;border-radius:4px"></div>
<svg class="r" style="left:1786px;top:605.2px" width="19" height="17"><path d="M1.9 14.8 V2.2 H8.2 L9.6 3.8 H14.5 V6.4" fill="none" stroke="#fff" stroke-width="1.4" stroke-linejoin="round"/><path d="M1.9 14.8 L4.6 7 H17.5 L15.2 14.8 Z" fill="none" stroke="#fff" stroke-width="1.4" stroke-linejoin="round"/></svg>
<div class="t" style="left:335.8px;top:650.75px;font-size:14px;line-height:14px;font-weight:400;color:#8f97a4;">9</div>
<div class="t" style="left:366px;top:649.66px;font-size:16px;line-height:16px;font-weight:400;color:#4f5d73;">10-2023010</div>
<div class="t" style="left:547px;top:649.66px;font-size:16px;line-height:16px;font-weight:400;color:#4f5d73;">Pavia</div>
<div class="t" style="left:661.5px;top:649.66px;font-size:16px;line-height:16px;font-weight:400;color:#4f5d73;">Christian</div>
<div class="t" style="left:785px;top:649.66px;font-size:16px;line-height:16px;font-weight:400;color:#4f5d73;">Day shift</div>
<div class="t" style="left:882px;width:48px;text-align:center;top:649.66px;font-size:16px;line-height:16px;font-weight:400;color:#4f5d73;letter-spacing:-0.3px">0:00</div>
<div class="t" style="left:930px;width:59px;text-align:center;top:649.66px;font-size:16px;line-height:16px;font-weight:400;color:#4f5d73;letter-spacing:-0.5px">23:59</div>
<div class="t" style="left:989px;width:49px;text-align:center;top:649.66px;font-size:16px;line-height:16px;font-weight:400;color:#4f5d73;letter-spacing:-0.3px">0:00</div>
<div class="t" style="left:1038px;width:59px;text-align:center;top:649.66px;font-size:16px;line-height:16px;font-weight:400;color:#4f5d73;letter-spacing:-0.5px">23:59</div>
<div class="t" style="left:1097px;width:53px;text-align:center;top:649.66px;font-size:16px;line-height:16px;font-weight:400;color:#4f5d73;letter-spacing:-0.3px">0:00</div>
<div class="t" style="left:1150px;width:64px;text-align:center;top:649.66px;font-size:16px;line-height:16px;font-weight:400;color:#4f5d73;letter-spacing:-0.5px">23:59</div>
<div class="t" style="left:1214px;width:48px;text-align:center;top:649.66px;font-size:16px;line-height:16px;font-weight:400;color:#4f5d73;letter-spacing:-0.3px">0:00</div>
<div class="t" style="left:1262px;width:60px;text-align:center;top:649.66px;font-size:16px;line-height:16px;font-weight:400;color:#4f5d73;letter-spacing:-0.5px">23:59</div>
<div class="t" style="left:1322px;width:48px;text-align:center;top:649.66px;font-size:16px;line-height:16px;font-weight:400;color:#4f5d73;letter-spacing:-0.3px">0:00</div>
<div class="t" style="left:1370px;width:59px;text-align:center;top:649.66px;font-size:16px;line-height:16px;font-weight:400;color:#4f5d73;letter-spacing:-0.5px">23:59</div>
<div class="t" style="left:1429px;width:48px;text-align:center;top:649.66px;font-size:16px;line-height:16px;font-weight:400;color:#4f5d73;letter-spacing:-0.3px">0:00</div>
<div class="t" style="left:1477px;width:60px;text-align:center;top:649.66px;font-size:16px;line-height:16px;font-weight:400;color:#4f5d73;letter-spacing:-0.5px">23:59</div>
<div class="r pill" style="left:1619.5px;top:645.4px;width:42px;height:21px;background:#3399ff">Initial</div>
<div class="r pill" style="left:1682px;top:645.4px;width:65.5px;height:21px;background:#2eb85c">Approved</div>
<div class="r" style="left:1773px;top:643.4px;width:44px;height:39px;background:#3399ff;border-radius:4px"></div>
<svg class="r" style="left:1786px;top:653.4px" width="19" height="17"><path d="M1.9 14.8 V2.2 H8.2 L9.6 3.8 H14.5 V6.4" fill="none" stroke="#fff" stroke-width="1.4" stroke-linejoin="round"/><path d="M1.9 14.8 L4.6 7 H17.5 L15.2 14.8 Z" fill="none" stroke="#fff" stroke-width="1.4" stroke-linejoin="round"/></svg>
<div class="t" style="left:335.8px;top:698.95px;font-size:14px;line-height:14px;font-weight:400;color:#8f97a4;">10</div>
<div class="t" style="left:366px;top:697.86px;font-size:16px;line-height:16px;font-weight:400;color:#4f5d73;">10-2023009</div>
<div class="t" style="left:547px;top:697.86px;font-size:16px;line-height:16px;font-weight:400;color:#4f5d73;">Layog</div>
<div class="t" style="left:661.5px;top:697.86px;font-size:16px;line-height:16px;font-weight:400;color:#4f5d73;">Jasper</div>
<div class="t" style="left:785px;top:697.86px;font-size:16px;line-height:16px;font-weight:400;color:#4f5d73;">Day shift</div>
<div class="t" style="left:882px;width:48px;text-align:center;top:697.86px;font-size:16px;line-height:16px;font-weight:400;color:#4f5d73;letter-spacing:-0.3px">0:00</div>
<div class="t" style="left:930px;width:59px;text-align:center;top:697.86px;font-size:16px;line-height:16px;font-weight:400;color:#4f5d73;letter-spacing:-0.5px">23:59</div>
<div class="t" style="left:989px;width:49px;text-align:center;top:697.86px;font-size:16px;line-height:16px;font-weight:400;color:#4f5d73;letter-spacing:-0.3px">0:00</div>
<div class="t" style="left:1038px;width:59px;text-align:center;top:697.86px;font-size:16px;line-height:16px;font-weight:400;color:#4f5d73;letter-spacing:-0.5px">23:59</div>
<div class="t" style="left:1097px;width:53px;text-align:center;top:697.86px;font-size:16px;line-height:16px;font-weight:400;color:#4f5d73;letter-spacing:-0.3px">0:00</div>
<div class="t" style="left:1150px;width:64px;text-align:center;top:697.86px;font-size:16px;line-height:16px;font-weight:400;color:#4f5d73;letter-spacing:-0.5px">23:59</div>
<div class="t" style="left:1214px;width:48px;text-align:center;top:697.86px;font-size:16px;line-height:16px;font-weight:400;color:#4f5d73;letter-spacing:-0.3px">0:00</div>
<div class="t" style="left:1262px;width:60px;text-align:center;top:697.86px;font-size:16px;line-height:16px;font-weight:400;color:#4f5d73;letter-spacing:-0.5px">23:59</div>
<div class="t" style="left:1322px;width:48px;text-align:center;top:697.86px;font-size:16px;line-height:16px;font-weight:400;color:#4f5d73;letter-spacing:-0.3px">0:00</div>
<div class="t" style="left:1370px;width:59px;text-align:center;top:697.86px;font-size:16px;line-height:16px;font-weight:400;color:#4f5d73;letter-spacing:-0.5px">23:59</div>
<div class="t" style="left:1429px;width:48px;text-align:center;top:697.86px;font-size:16px;line-height:16px;font-weight:400;color:#4f5d73;letter-spacing:-0.3px">0:00</div>
<div class="t" style="left:1477px;width:60px;text-align:center;top:697.86px;font-size:16px;line-height:16px;font-weight:400;color:#4f5d73;letter-spacing:-0.5px">23:59</div>
<div class="r pill" style="left:1619.5px;top:693.6px;width:42px;height:21px;background:#3399ff">Initial</div>
<div class="r pill" style="left:1682px;top:693.6px;width:65.5px;height:21px;background:#2eb85c">Approved</div>
<div class="r" style="left:1773px;top:691.6px;width:44px;height:39px;background:#3399ff;border-radius:4px"></div>
<svg class="r" style="left:1786px;top:701.6px" width="19" height="17"><path d="M1.9 14.8 V2.2 H8.2 L9.6 3.8 H14.5 V6.4" fill="none" stroke="#fff" stroke-width="1.4" stroke-linejoin="round"/><path d="M1.9 14.8 L4.6 7 H17.5 L15.2 14.8 Z" fill="none" stroke="#fff" stroke-width="1.4" stroke-linejoin="round"/></svg>
<div class="r" style="left:809px;top:753px;width:542px;height:39px;background:#fff;border:1px solid #c9cdd4;border-radius:4px;box-sizing:border-box"></div>
<div class="r" style="left:876px;top:753px;width:1px;height:39px;background:#c9cdd4;"></div>
<div class="r" style="left:909px;top:753px;width:1px;height:39px;background:#c9cdd4;"></div>
<div class="r" style="left:944px;top:753px;width:1px;height:39px;background:#c9cdd4;"></div>
<div class="r" style="left:979px;top:753px;width:1px;height:39px;background:#c9cdd4;"></div>
<div class="r" style="left:1013px;top:753px;width:1px;height:39px;background:#c9cdd4;"></div>
<div class="r" style="left:1048px;top:753px;width:1px;height:39px;background:#c9cdd4;"></div>
<div class="r" style="left:1083px;top:753px;width:1px;height:39px;background:#c9cdd4;"></div>
<div class="r" style="left:1117px;top:753px;width:1px;height:39px;background:#c9cdd4;"></div>
<div class="r" style="left:1152px;top:753px;width:1px;height:39px;background:#c9cdd4;"></div>
<div class="r" style="left:1195px;top:753px;width:1px;height:39px;background:#c9cdd4;"></div>
<div class="r" style="left:1232px;top:753px;width:1px;height:39px;background:#c9cdd4;"></div>
<div class="r" style="left:1275px;top:753px;width:1px;height:39px;background:#c9cdd4;"></div>
<div class="r" style="left:1319px;top:753px;width:1px;height:39px;background:#c9cdd4;"></div>
<div class="r" style="left:840px;top:753px;width:36px;height:39px;background:#321fdb;"></div>
<div class="t" style="left:809px;width:31px;text-align:center;top:766.26px;font-size:16px;line-height:16px;font-weight:400;color:#8a93a2;">‹</div>
<div class="t" style="left:840px;width:36px;text-align:center;top:766.26px;font-size:16px;line-height:16px;font-weight:400;color:#ffffff;">1</div>
<div class="t" style="left:876px;width:33px;text-align:center;top:766.26px;font-size:16px;line-height:16px;font-weight:400;color:#321fdb;">2</div>
<div class="t" style="left:909px;width:35px;text-align:center;top:766.26px;font-size:16px;line-height:16px;font-weight:400;color:#321fdb;">3</div>
<div class="t" style="left:944px;width:35px;text-align:center;top:766.26px;font-size:16px;line-height:16px;font-weight:400;color:#321fdb;">4</div>
<div class="t" style="left:979px;width:34px;text-align:center;top:766.26px;font-size:16px;line-height:16px;font-weight:400;color:#321fdb;">5</div>
<div class="t" style="left:1013px;width:35px;text-align:center;top:766.26px;font-size:16px;line-height:16px;font-weight:400;color:#321fdb;">6</div>
<div class="t" style="left:1048px;width:35px;text-align:center;top:766.26px;font-size:16px;line-height:16px;font-weight:400;color:#321fdb;">7</div>
<div class="t" style="left:1083px;width:34px;text-align:center;top:766.26px;font-size:16px;line-height:16px;font-weight:400;color:#321fdb;">8</div>
<div class="t" style="left:1117px;width:35px;text-align:center;top:766.26px;font-size:16px;line-height:16px;font-weight:400;color:#321fdb;">9</div>
<div class="t" style="left:1152px;width:43px;text-align:center;top:766.26px;font-size:16px;line-height:16px;font-weight:400;color:#321fdb;">10</div>
<div class="t" style="left:1195px;width:37px;text-align:center;top:766.26px;font-size:16px;line-height:16px;font-weight:400;color:#8a93a2;letter-spacing:-1px">...</div>
<div class="t" style="left:1232px;width:43px;text-align:center;top:766.26px;font-size:16px;line-height:16px;font-weight:400;color:#321fdb;">43</div>
<div class="t" style="left:1275px;width:44px;text-align:center;top:766.26px;font-size:16px;line-height:16px;font-weight:400;color:#321fdb;">44</div>
<div class="t" style="left:1319px;width:31px;text-align:center;top:766.26px;font-size:16px;line-height:16px;font-weight:400;color:#321fdb;">›</div>
<div class="t" style="left:900px;width:360px;text-align:center;top:814.26px;font-size:16px;line-height:16px;font-weight:400;color:#a3a9b3;letter-spacing:0.15px">Showing 1 to 10 of 436 results</div>
<div class="r" style="left:2px;top:74px;width:299px;height:474px;background:transparent;border:7px solid #000;box-sizing:border-box"></div>
</body></html>
